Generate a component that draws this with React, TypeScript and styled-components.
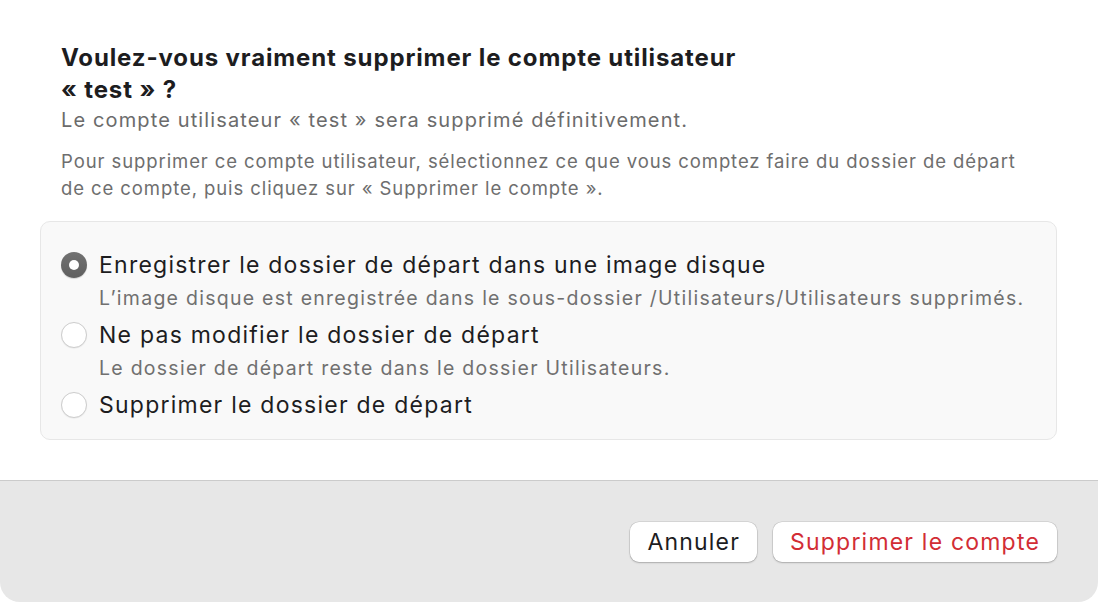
import React, { useState } from "react";
import styled, { createGlobalStyle } from "styled-components";

const Global = createGlobalStyle`
  html, body { margin: 0; padding: 0; background: #ffffff; }
  body { font-family: Inter, "Noto Sans", "Liberation Sans", sans-serif; -webkit-font-smoothing: antialiased; }
  * { box-sizing: border-box; }
`;

const Dialog = styled.div`
  width: 1098px;
  height: 602px;
  display: flex;
  flex-direction: column;
  background: #ffffff;
`;

const Body = styled.div`
  flex: 1;
  display: flex;
  flex-direction: column;
  padding: 42px 41px 0 40px;
`;

const Header = styled.div`
  padding-left: 21px;
  display: flex;
  flex-direction: column;
`;

const Title = styled.h1`
  margin: 0;
  font-size: 24px;
  line-height: 32px;
  font-weight: 700;
  color: #1d1d1f;
  letter-spacing: 0.87px;
`;

const Subtitle = styled.p`
  margin: 0;
  font-size: 20px;
  line-height: 28px;
  color: #6b6b6b;
  letter-spacing: 1.13px;
`;

const Info = styled.p`
  margin: 14px 0 0;
  font-size: 18.5px;
  line-height: 27px;
  color: #6e6e6e;
  letter-spacing: 0.91px;
  white-space: nowrap;
`;

const OptionsBox = styled.div`
  margin-top: 19px;
  background: #f9f9f9;
  border: 1px solid #e7e7e7;
  border-radius: 10px;
  padding: 25px 20px 16px;
  display: flex;
  flex-direction: column;
  gap: 1px;
`;

const Option = styled.label`
  display: grid;
  grid-template-columns: 26px 1fr;
  column-gap: 12px;
  align-items: center;
  cursor: default;
`;

const RadioCircle = styled.span<{ $checked: boolean }>`
  width: 26px;
  height: 26px;
  border-radius: 50%;
  display: flex;
  align-items: center;
  justify-content: center;
  background: ${(p) => (p.$checked ? "linear-gradient(#727272, #5f5f5f)" : "#ffffff")};
  border: ${(p) => (p.$checked ? "none" : "1px solid #cdcdcd")};
  box-shadow: ${(p) => (p.$checked ? "0 1px 1px rgba(0,0,0,0.15)" : "0 0.5px 1px rgba(0,0,0,0.08)")};
  &::after {
    content: "";
    display: ${(p) => (p.$checked ? "block" : "none")};
    width: 10px;
    height: 10px;
    border-radius: 50%;
    background: #ffffff;
  }
`;

const OptionLabel = styled.span`
  font-size: 23px;
  line-height: 36px;
  color: #1d1d1f;
  letter-spacing: 1.24px;
  white-space: nowrap;
`;

const OptionDesc = styled.span`
  grid-column: 2;
  font-size: 19.5px;
  line-height: 36px;
  color: #707070;
  margin-top: -3px;
  letter-spacing: 1.26px;
  white-space: nowrap;
`;

const Footer = styled.div`
  height: 122px;
  background: #e7e7e7;
  border-top: 1px solid #cbcbcb;
  border-radius: 0 0 20px 20px;
  display: flex;
  justify-content: flex-end;
  align-items: flex-start;
  gap: 16px;
  padding: 41px 41px 0 0;
`;

const Button = styled.button<{ $danger?: boolean }>`
  height: 40px;
  padding: 0 17px;
  border: none;
  border-radius: 9px;
  background: #ffffff;
  box-shadow: 0 0 0 0.5px rgba(0,0,0,0.15), 0 1px 2px rgba(0,0,0,0.2);
  font-family: inherit;
  font-size: 23px;
  letter-spacing: 1.2px;
  color: ${(p) => (p.$danger ? "#d22d35" : "#1d1d1f")};
  cursor: default;
`;

const options = [
  {
    label: "Enregistrer le dossier de départ dans une image disque",
    desc: "L’image disque est enregistrée dans le sous-dossier /Utilisateurs/Utilisateurs supprimés.",
  },
  {
    label: "Ne pas modifier le dossier de départ",
    desc: "Le dossier de départ reste dans le dossier Utilisateurs.",
  },
  { label: "Supprimer le dossier de départ", desc: "" },
];

export default function App() {
  const [sel, setSel] = useState(0);
  return (
    <>
      <Global />
      <Dialog>
        <Body>
          <Header>
            <Title>
              Voulez-vous vraiment supprimer le compte utilisateur
              <br />« test » ?
            </Title>
            <Subtitle>Le compte utilisateur « test » sera supprimé définitivement.</Subtitle>
            <Info>
              Pour supprimer ce compte utilisateur, sélectionnez ce que vous comptez faire du dossier de départ
              <br />
              de ce compte, puis cliquez sur « Supprimer le compte ».
            </Info>
          </Header>
          <OptionsBox>
            {options.map((o, i) => (
              <Option key={i} onClick={() => setSel(i)}>
                <RadioCircle $checked={sel === i} />
                <OptionLabel>{o.label}</OptionLabel>
                {o.desc && <OptionDesc>{o.desc}</OptionDesc>}
              </Option>
            ))}
          </OptionsBox>
        </Body>
        <Footer>
          <Button>Annuler</Button>
          <Button $danger>Supprimer le compte</Button>
        </Footer>
      </Dialog>
    </>
  );
}
